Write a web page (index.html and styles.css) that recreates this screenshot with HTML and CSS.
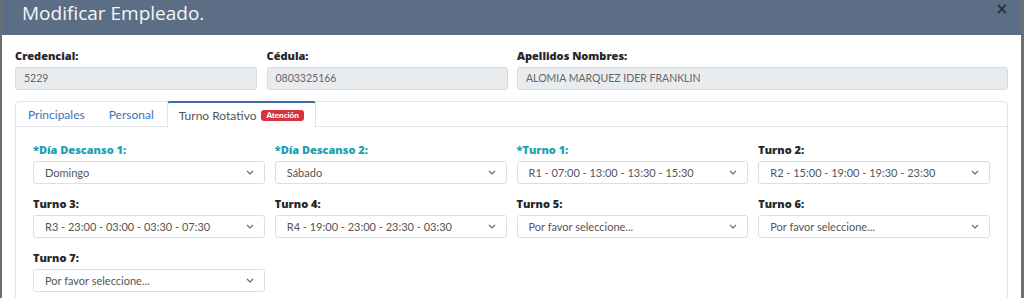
FILE: index.html
```html
<!DOCTYPE html>
<html lang="es">
<head>
<meta charset="utf-8">
<title>Modificar Empleado</title>
<link rel="stylesheet" href="styles.css">
</head>
<body>
<div class="modal">
  <div class="modal-header">
    <h4 class="modal-title">Modificar Empleado.</h4>
    <span class="close">&times;</span>
  </div>
  <div class="modal-body">
    <div class="top-grid">
      <div class="field">
        <label class="lbl">Credencial:</label>
        <div class="input">5229</div>
      </div>
      <div class="field">
        <label class="lbl">Cédula:</label>
        <div class="input">0803325166</div>
      </div>
      <div class="field">
        <label class="lbl">Apellidos Nombres:</label>
        <div class="input">ALOMIA MARQUEZ IDER FRANKLIN</div>
      </div>
    </div>

    <div class="card">
      <div class="card-header">
        <ul class="tabs">
          <li class="tab">Principales</li>
          <li class="tab">Personal</li>
          <li class="tab active">Turno Rotativo <span class="badge">Atención</span></li>
        </ul>
      </div>
      <div class="card-body">
        <div class="sel-grid">
          <div class="field">
            <label class="lbl req">*Día Descanso 1:</label>
            <div class="select"><span>Domingo</span><svg class="chev" viewBox="0 0 8 5"><path d="M1 1l3 3 3-3"/></svg></div>
          </div>
          <div class="field">
            <label class="lbl req">*Día Descanso 2:</label>
            <div class="select"><span>Sábado</span><svg class="chev" viewBox="0 0 8 5"><path d="M1 1l3 3 3-3"/></svg></div>
          </div>
          <div class="field">
            <label class="lbl req">*Turno 1:</label>
            <div class="select"><span>R1 - 07:00 - 13:00 - 13:30 - 15:30</span><svg class="chev" viewBox="0 0 8 5"><path d="M1 1l3 3 3-3"/></svg></div>
          </div>
          <div class="field">
            <label class="lbl">Turno 2:</label>
            <div class="select"><span>R2 - 15:00 - 19:00 - 19:30 - 23:30</span><svg class="chev" viewBox="0 0 8 5"><path d="M1 1l3 3 3-3"/></svg></div>
          </div>
          <div class="field">
            <label class="lbl">Turno 3:</label>
            <div class="select"><span>R3 - 23:00 - 03:00 - 03:30 - 07:30</span><svg class="chev" viewBox="0 0 8 5"><path d="M1 1l3 3 3-3"/></svg></div>
          </div>
          <div class="field">
            <label class="lbl">Turno 4:</label>
            <div class="select"><span>R4 - 19:00 - 23:00 - 23:30 - 03:30</span><svg class="chev" viewBox="0 0 8 5"><path d="M1 1l3 3 3-3"/></svg></div>
          </div>
          <div class="field">
            <label class="lbl">Turno 5:</label>
            <div class="select"><span>Por favor seleccione...</span><svg class="chev" viewBox="0 0 8 5"><path d="M1 1l3 3 3-3"/></svg></div>
          </div>
          <div class="field">
            <label class="lbl">Turno 6:</label>
            <div class="select"><span>Por favor seleccione...</span><svg class="chev" viewBox="0 0 8 5"><path d="M1 1l3 3 3-3"/></svg></div>
          </div>
          <div class="field">
            <label class="lbl">Turno 7:</label>
            <div class="select"><span>Por favor seleccione...</span><svg class="chev" viewBox="0 0 8 5"><path d="M1 1l3 3 3-3"/></svg></div>
          </div>
        </div>
      </div>
    </div>
  </div>
</div>
</body>
</html>
```

FILE: styles.css
```css
* { box-sizing: border-box; }
html, body { margin: 0; padding: 0; }
body {
  background: #6e6e6e;
  font-family: Lato, "Open Sans", "DejaVu Sans", sans-serif;
  height: 298px;
  overflow: hidden;
}
.modal {
  margin: 0 3px 0 2px;
  background: #fff;
  height: 298px;
  overflow: hidden;
}
.modal-header {
  height: 35px;
  background: #5b6e85;
  display: flex;
  justify-content: space-between;
  align-items: flex-start;
  padding: 0 13px 0 20px;
}
.modal-title {
  margin: 0;
  padding-top: 1px;
  font-family: "Open Sans", Lato, sans-serif;
  font-weight: 400;
  font-size: 19px;
  line-height: 24px;
  color: #f4f6f8;
}
.close {
  font-family: "DejaVu Sans", sans-serif;
  font-size: 15px;
  line-height: 16px;
  font-weight: 700;
  color: #27303b;
  padding-top: 1px;
}
.modal-body {
  padding: 14px 13px 0 13px;
}
.top-grid {
  display: grid;
  grid-template-columns: 242px 241px 1fr;
  column-gap: 9.5px;
}
.field { display: flex; flex-direction: column; }
.lbl {
  font-family: "Open Sans", Lato, sans-serif;
  font-size: 11px;
  line-height: 14px;
  font-weight: 800;
  color: #262626;
  margin-bottom: 4px;
}
.lbl.req { color: #1d9fb4; }
.input {
  height: 23px;
  background: #e9ecef;
  border: 1px solid #d8dbde;
  border-radius: 3px;
  padding: 0 8px;
  font-size: 10.5px;
  line-height: 21px;
  color: #666;
}
.card {
  margin-top: 11px;
  border: 1px solid #e2e4e6;
  border-radius: 4px;
  height: 200px;
}
.card-header {
  height: 25px;
  border-bottom: 1px solid #e2e4e6;
}
.tabs {
  list-style: none;
  margin: 0;
  padding: 0;
  display: flex;
  height: 25px;
}
.tab {
  padding: 0 12px;
  font-size: 12px;
  line-height: 25px;
  color: #3d72b4;
}
.tab.active {
  color: #555;
  background: #fff;
  border: 1px solid #e2e4e6;
  border-top: 2px solid #3e69ad;
  border-bottom-color: #fff;
  border-radius: 3px 3px 0 0;
  margin-top: -1px;
  height: 27px;
  line-height: 23px;
  padding: 0 11px 0 11px;
  margin-left: 1px;
  display: flex;
  align-items: center;
  gap: 5px;
}
.badge {
  background: #d9323f;
  color: #fff;
  font-size: 8px;
  font-weight: 900;
  line-height: 11px;
  padding: 0 5px;
  border-radius: 3px;
}
.card-body {
  padding: 16px 17px 0 17px;
}
.sel-grid {
  display: grid;
  grid-template-columns: repeat(4, 1fr);
  column-gap: 10px;
  row-gap: 13px;
}
.select {
  height: 23px;
  background: #fff;
  border: 1px solid #dcdfe2;
  border-radius: 3px;
  padding: 0 10px 0 11px;
  display: flex;
  align-items: center;
  justify-content: space-between;
  font-size: 11px;
  color: #555;
}
.chev {
  width: 8px;
  height: 5px;
  fill: none;
  stroke: #6a6a6a;
  stroke-width: 1.2;
}
```
